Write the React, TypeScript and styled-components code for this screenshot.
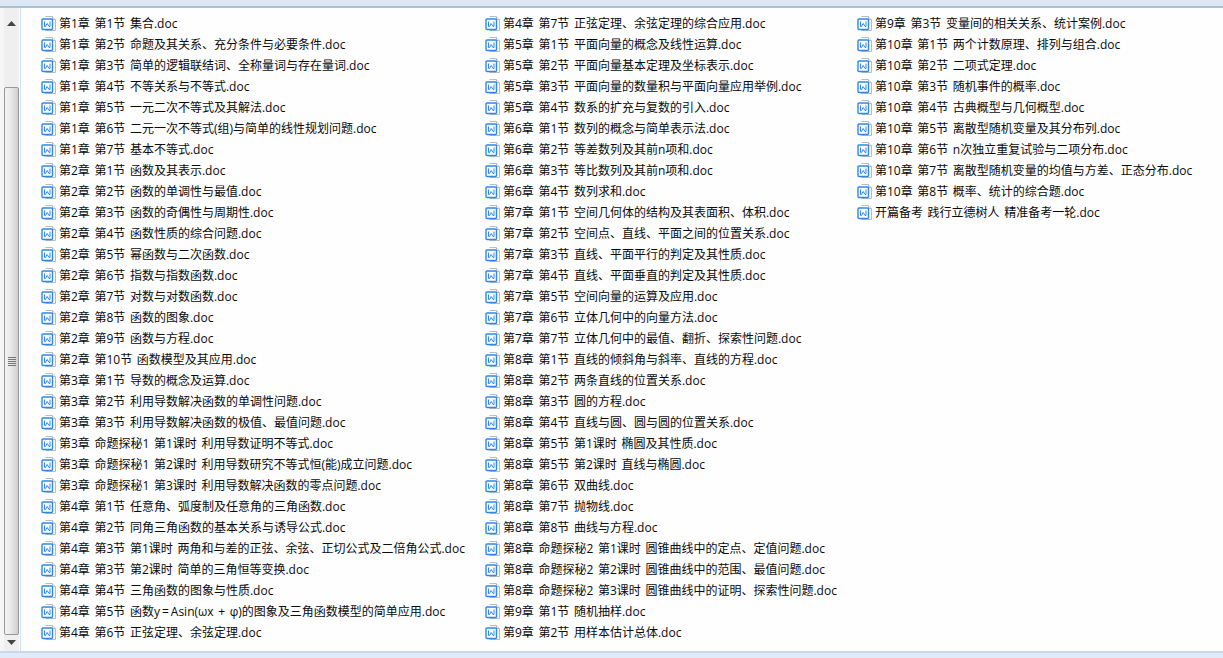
import React from "react";
import styled, { createGlobalStyle } from "styled-components";

const Global = createGlobalStyle`
  html, body { margin: 0; padding: 0; height: 100%; overflow: hidden; background: #fff; }
  #root { height: 658px; }
`;

const Frame = styled.div`
  width: 1223px; height: 658px; display: flex; flex-direction: column;
  background: #dbe7f6; overflow: hidden;
`;
const TopEdge = styled.div`
  height: 6px; flex: none; background: #dce8f6; border-bottom: 2px solid #aebdd0;
`;
const Middle = styled.div`
  flex: 1; min-height: 0; display: flex; background: #fff;
`;
const Scrollbar = styled.div`
  width: 22px; flex: none; box-sizing: border-box; padding: 0 3px 0 4px;
  display: flex; flex-direction: column; background: linear-gradient(90deg, #f6f6f6 0 4px, #efefef 4px 19px, #fff 19px 20px, #cfe0f3 20px 21px, #fbfcfe 21px);
`;
const ArrowBtn = styled.div<{ $h: number }>`
  height: ${p => p.$h}px; flex: none; display: flex; align-items: center; justify-content: center;
`;
const Track = styled.div`
  flex: 1; min-height: 0; display: flex; flex-direction: column;
`;
const Thumb = styled.div`
  height: 548px; flex: none; box-sizing: border-box; border: 1px solid #979797; border-radius: 2px;
  background: linear-gradient(90deg, #f4f4f4 0%, #e8e8e8 45%, #cfcfcf 100%);
  display: flex; align-items: center; justify-content: center;
`;
const Content = styled.div`
  flex: 1; display: flex; align-items: flex-start; padding: 5px 0 0 19px; background: #fefefe;
`;
const Column = styled.div<{ $w: number }>`
  width: ${p => p.$w}px; flex: none; display: flex; flex-direction: column;
`;
const Row = styled.div`
  height: 21px; display: flex; align-items: center; gap: 2px; white-space: pre;
  font: 12px/21px "Open Sans", "Noto Sans CJK SC", sans-serif; word-spacing: 1.5px; color: #0a0a0a;
`;
const BottomEdge = styled.div`
  height: 5px; flex: none; background: #e0eaf8; border-top: 2px solid #c9d8ec;
`;

const DocIcon = () => (
  <svg width="16" height="16" viewBox="0 0 16 16" style={{ flex: "none" }}>
    <path d="M4.5 .5H11.5L14.5 3.5V14.5H4.5" fill="#fff" stroke="#b4bcc6" />
    <path d="M11.5 .5V3.5H14.5" fill="#eef1f4" stroke="#b4bcc6" />
    <rect x="1" y="3" width="10.5" height="10.5" rx="1" fill="#fff" stroke="#2f86e8" strokeWidth="1.4" />
    <path d="M3.5 5.5V10.5H4.5L6.2 7.5L8 10.5H9V5.5" fill="none" stroke="#2f86e8" strokeWidth="1" />
  </svg>
);

const col1 = [
  "第1章 第1节 集合.doc","第1章 第2节 命题及其关系、充分条件与必要条件.doc","第1章 第3节 简单的逻辑联结词、全称量词与存在量词.doc","第1章 第4节 不等关系与不等式.doc","第1章 第5节 一元二次不等式及其解法.doc","第1章 第6节 二元一次不等式(组)与简单的线性规划问题.doc","第1章 第7节 基本不等式.doc","第2章 第1节 函数及其表示.doc","第2章 第2节 函数的单调性与最值.doc","第2章 第3节 函数的奇偶性与周期性.doc","第2章 第4节 函数性质的综合问题.doc","第2章 第5节 幂函数与二次函数.doc","第2章 第6节 指数与指数函数.doc","第2章 第7节 对数与对数函数.doc","第2章 第8节 函数的图象.doc","第2章 第9节 函数与方程.doc","第2章 第10节 函数模型及其应用.doc","第3章 第1节 导数的概念及运算.doc","第3章 第2节 利用导数解决函数的单调性问题.doc","第3章 第3节 利用导数解决函数的极值、最值问题.doc","第3章 命题探秘1 第1课时 利用导数证明不等式.doc","第3章 命题探秘1 第2课时 利用导数研究不等式恒(能)成立问题.doc","第3章 命题探秘1 第3课时 利用导数解决函数的零点问题.doc","第4章 第1节 任意角、弧度制及任意角的三角函数.doc","第4章 第2节 同角三角函数的基本关系与诱导公式.doc","第4章 第3节 第1课时 两角和与差的正弦、余弦、正切公式及二倍角公式.doc","第4章 第3节 第2课时 简单的三角恒等变换.doc","第4章 第4节 三角函数的图象与性质.doc","第4章 第5节 函数y\u2009=\u2009Asin(ωx + φ)的图象及三角函数模型的简单应用.doc","第4章 第6节 正弦定理、余弦定理.doc",
];
const col2 = [
  "第4章 第7节 正弦定理、余弦定理的综合应用.doc","第5章 第1节 平面向量的概念及线性运算.doc","第5章 第2节 平面向量基本定理及坐标表示.doc","第5章 第3节 平面向量的数量积与平面向量应用举例.doc","第5章 第4节 数系的扩充与复数的引入.doc","第6章 第1节 数列的概念与简单表示法.doc","第6章 第2节 等差数列及其前n项和.doc","第6章 第3节 等比数列及其前n项和.doc","第6章 第4节 数列求和.doc","第7章 第1节 空间几何体的结构及其表面积、体积.doc","第7章 第2节 空间点、直线、平面之间的位置关系.doc","第7章 第3节 直线、平面平行的判定及其性质.doc","第7章 第4节 直线、平面垂直的判定及其性质.doc","第7章 第5节 空间向量的运算及应用.doc","第7章 第6节 立体几何中的向量方法.doc","第7章 第7节 立体几何中的最值、翻折、探索性问题.doc","第8章 第1节 直线的倾斜角与斜率、直线的方程.doc","第8章 第2节 两条直线的位置关系.doc","第8章 第3节 圆的方程.doc","第8章 第4节 直线与圆、圆与圆的位置关系.doc","第8章 第5节 第1课时 椭圆及其性质.doc","第8章 第5节 第2课时 直线与椭圆.doc","第8章 第6节 双曲线.doc","第8章 第7节 抛物线.doc","第8章 第8节 曲线与方程.doc","第8章 命题探秘2 第1课时 圆锥曲线中的定点、定值问题.doc","第8章 命题探秘2 第2课时 圆锥曲线中的范围、最值问题.doc","第8章 命题探秘2 第3课时 圆锥曲线中的证明、探索性问题.doc","第9章 第1节 随机抽样.doc","第9章 第2节 用样本估计总体.doc",
];
const col3 = [
  "第9章 第3节 变量间的相关关系、统计案例.doc","第10章 第1节 两个计数原理、排列与组合.doc","第10章 第2节 二项式定理.doc","第10章 第3节 随机事件的概率.doc","第10章 第4节 古典概型与几何概型.doc","第10章 第5节 离散型随机变量及其分布列.doc","第10章 第6节 n次独立重复试验与二项分布.doc","第10章 第7节 离散型随机变量的均值与方差、正态分布.doc","第10章 第8节 概率、统计的综合题.doc","开篇备考 践行立德树人 精准备考一轮.doc",
];

const columns: [string[], number][] = [[col1, 444], [col2, 372], [col3, 340]];

export default function App() {
  return (
    <Frame>
      <Global />
      <TopEdge />
      <Middle>
        <Scrollbar>
          <ArrowBtn $h={79}>
            <svg width="9" height="5" viewBox="0 0 9 5" style={{ marginTop: -48 }}><path d="M4.5 0L9 5H0Z" fill="#444" /></svg>
          </ArrowBtn>
          <Track>
            <Thumb>
              <svg width="8" height="9" viewBox="0 0 8 9"><path d="M0 .5H8M0 2.5H8M0 4.5H8M0 6.5H8M0 8.5H8" stroke="#777" /></svg>
            </Thumb>
            <ArrowBtn $h={15}>
              <svg width="9" height="5" viewBox="0 0 9 5"><path d="M0 0H9L4.5 5Z" fill="#444" /></svg>
            </ArrowBtn>
          </Track>
        </Scrollbar>
        <Content>
          {columns.map(([items, w], i) => (
            <Column key={i} $w={w}>
              {items.map(t => (
                <Row key={t}><DocIcon />{t}</Row>
              ))}
            </Column>
          ))}
        </Content>
      </Middle>
      <BottomEdge />
    </Frame>
  );
}
